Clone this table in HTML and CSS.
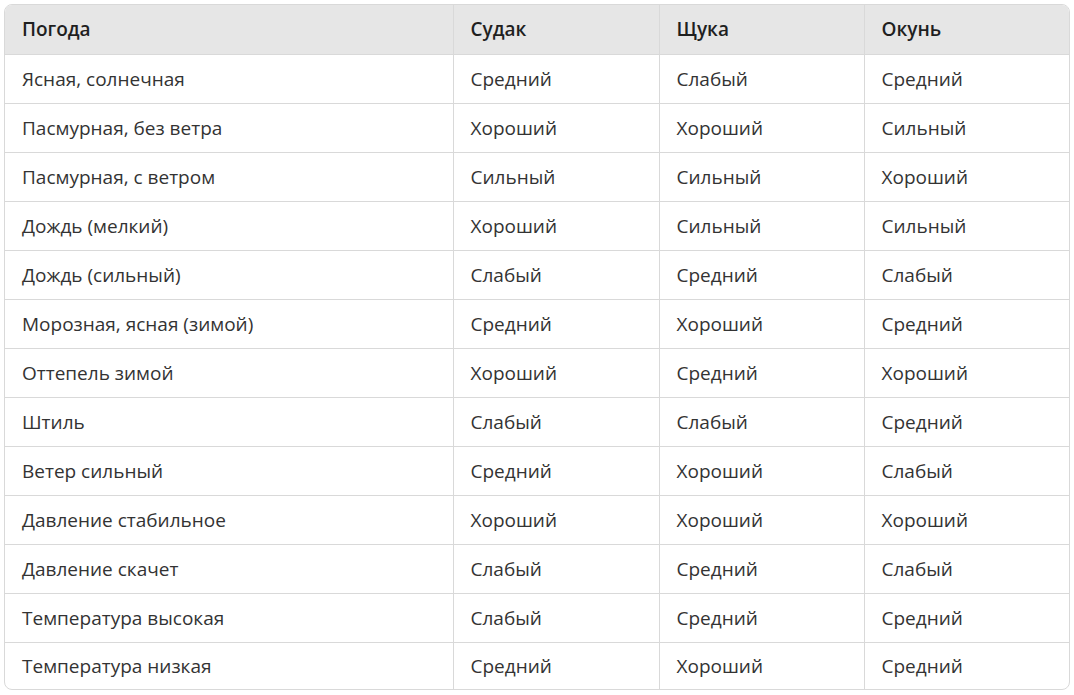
FILE: index.html
```html
<!DOCTYPE html>
<html lang="ru">
<head>
<meta charset="utf-8">
<link rel="stylesheet" href="styles.css">
</head>
<body>
<div class="wrap">
<table class="tbl">
<colgroup><col class="c1"><col class="c2"><col class="c3"><col class="c4"></colgroup>
<thead>
<tr><th>Погода</th><th>Судак</th><th>Щука</th><th>Окунь</th></tr>
</thead>
<tbody>
<tr><td>Ясная, солнечная</td><td>Средний</td><td>Слабый</td><td>Средний</td></tr>
<tr><td>Пасмурная, без ветра</td><td>Хороший</td><td>Хороший</td><td>Сильный</td></tr>
<tr><td>Пасмурная, с ветром</td><td>Сильный</td><td>Сильный</td><td>Хороший</td></tr>
<tr><td>Дождь (мелкий)</td><td>Хороший</td><td>Сильный</td><td>Сильный</td></tr>
<tr><td>Дождь (сильный)</td><td>Слабый</td><td>Средний</td><td>Слабый</td></tr>
<tr><td>Морозная, ясная (зимой)</td><td>Средний</td><td>Хороший</td><td>Средний</td></tr>
<tr><td>Оттепель зимой</td><td>Хороший</td><td>Средний</td><td>Хороший</td></tr>
<tr><td>Штиль</td><td>Слабый</td><td>Слабый</td><td>Средний</td></tr>
<tr><td>Ветер сильный</td><td>Средний</td><td>Хороший</td><td>Слабый</td></tr>
<tr><td>Давление стабильное</td><td>Хороший</td><td>Хороший</td><td>Хороший</td></tr>
<tr><td>Давление скачет</td><td>Слабый</td><td>Средний</td><td>Слабый</td></tr>
<tr><td>Температура высокая</td><td>Слабый</td><td>Средний</td><td>Средний</td></tr>
<tr><td>Температура низкая</td><td>Средний</td><td>Хороший</td><td>Средний</td></tr>
</tbody>
</table>
</div>
</body>
</html>
```
FILE: styles.css
```css
html, body {
  margin: 0;
  padding: 0;
  background: #ffffff;
}
body {
  padding: 4px 0 0 4px;
  font-family: "Open Sans", "Noto Sans", sans-serif;
  color: #333333;
}
.wrap {
  width: 1064px;
  border: 1px solid #d9d9d9;
  border-radius: 8px;
  overflow: hidden;
}
.tbl {
  width: 100%;
  border-collapse: collapse;
  table-layout: fixed;
  font-size: 19px;
}
.c1 { width: 448px; }
.c2 { width: 206px; }
.c3 { width: 205px; }
.c4 { width: 205px; }
.tbl th, .tbl td {
  height: 49px;
  padding: 0 17px;
  text-align: left;
  vertical-align: middle;
  border-left: 1px solid #d9d9d9;
  border-top: 1px solid #d9d9d9;
  box-sizing: border-box;
}
.tbl th:first-child, .tbl td:first-child { border-left: none; }
.tbl thead th {
  border-top: none;
  background: #e6e6e6;
  font-weight: 600;
  color: #1f1f1f;
}
.tbl tbody tr:last-child td {
  height: 47px;
}
```
